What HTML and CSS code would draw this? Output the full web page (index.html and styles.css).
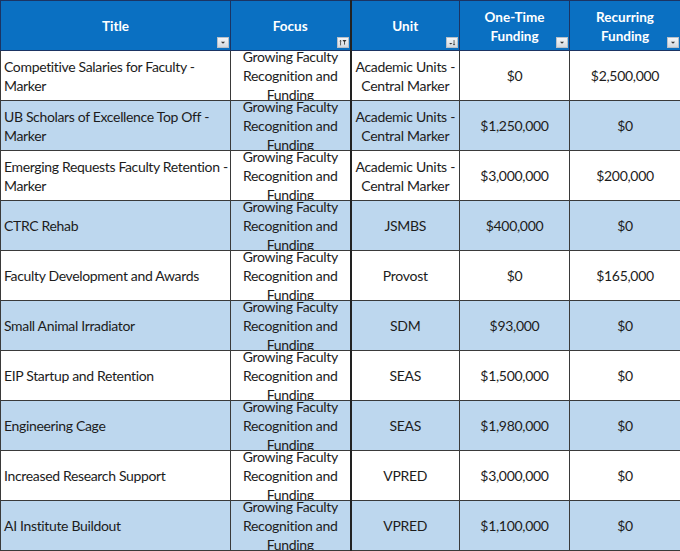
FILE: index.html
```html
<!DOCTYPE html>
<html>
<head>
<meta charset="utf-8">
<link rel="stylesheet" href="styles.css">
</head>
<body>
<table class="sheet">
  <colgroup>
    <col class="c-title"><col class="c-focus"><col class="c-unit"><col class="c-one"><col class="c-rec">
  </colgroup>
  <thead>
    <tr>
      <th><div class="hcell">Title<span class="fbtn"><svg viewBox="0 0 12 11"><path d="M3.5 4.5h5l-2.5 2.5z" fill="#333"/></svg></span></div></th>
      <th><div class="hcell">Focus<span class="fbtn"><svg viewBox="0 0 12 11"><path d="M3 3v6M2 4l1-1.2L4 4" stroke="#333" stroke-width="0.9" fill="none"/><path d="M5.3 2.5h5l-2 2.4v3.6l-1-.8v-2.8z" fill="#333"/></svg></span></div></th>
      <th class="thick"><div class="hcell">Unit<span class="fbtn"><svg viewBox="0 0 12 11"><path d="M2.5 6h4l-2 2z" fill="#333"/><path d="M8.5 2.5v6M7.5 7.5l1 1.2 1-1.2" stroke="#333" stroke-width="0.9" fill="none"/></svg></span></div></th>
      <th><div class="hcell">One-Time<br>Funding<span class="fbtn"><svg viewBox="0 0 12 11"><path d="M3.5 4.5h5l-2.5 2.5z" fill="#333"/></svg></span></div></th>
      <th><div class="hcell">Recurring<br>Funding<span class="fbtn"><svg viewBox="0 0 12 11"><path d="M3.5 4.5h5l-2.5 2.5z" fill="#333"/></svg></span></div></th>
    </tr>
  </thead>
  <tbody>
    <tr><td><div class="cell left">Competitive Salaries for Faculty - Marker</div></td><td><div class="cell">Growing Faculty Recognition and Funding</div></td><td class="thick"><div class="cell">Academic Units - Central Marker</div></td><td><div class="cell">$0</div></td><td><div class="cell">$2,500,000</div></td></tr>
    <tr class="alt"><td><div class="cell left">UB Scholars of Excellence Top Off - Marker</div></td><td><div class="cell">Growing Faculty Recognition and Funding</div></td><td class="thick"><div class="cell">Academic Units - Central Marker</div></td><td><div class="cell">$1,250,000</div></td><td><div class="cell">$0</div></td></tr>
    <tr><td><div class="cell left">Emerging Requests Faculty Retention - Marker</div></td><td><div class="cell">Growing Faculty Recognition and Funding</div></td><td class="thick"><div class="cell">Academic Units - Central Marker</div></td><td><div class="cell">$3,000,000</div></td><td><div class="cell">$200,000</div></td></tr>
    <tr class="alt"><td><div class="cell left">CTRC Rehab</div></td><td><div class="cell">Growing Faculty Recognition and Funding</div></td><td class="thick"><div class="cell">JSMBS</div></td><td><div class="cell">$400,000</div></td><td><div class="cell">$0</div></td></tr>
    <tr><td><div class="cell left">Faculty Development and Awards</div></td><td><div class="cell">Growing Faculty Recognition and Funding</div></td><td class="thick"><div class="cell">Provost</div></td><td><div class="cell">$0</div></td><td><div class="cell">$165,000</div></td></tr>
    <tr class="alt"><td><div class="cell left">Small Animal Irradiator</div></td><td><div class="cell">Growing Faculty Recognition and Funding</div></td><td class="thick"><div class="cell">SDM</div></td><td><div class="cell">$93,000</div></td><td><div class="cell">$0</div></td></tr>
    <tr><td><div class="cell left">EIP Startup and Retention</div></td><td><div class="cell">Growing Faculty Recognition and Funding</div></td><td class="thick"><div class="cell">SEAS</div></td><td><div class="cell">$1,500,000</div></td><td><div class="cell">$0</div></td></tr>
    <tr class="alt"><td><div class="cell left">Engineering Cage</div></td><td><div class="cell">Growing Faculty Recognition and Funding</div></td><td class="thick"><div class="cell">SEAS</div></td><td><div class="cell">$1,980,000</div></td><td><div class="cell">$0</div></td></tr>
    <tr><td><div class="cell left">Increased Research Support</div></td><td><div class="cell">Growing Faculty Recognition and Funding</div></td><td class="thick"><div class="cell">VPRED</div></td><td><div class="cell">$3,000,000</div></td><td><div class="cell">$0</div></td></tr>
    <tr class="alt"><td><div class="cell left">AI Institute Buildout</div></td><td><div class="cell">Growing Faculty Recognition and Funding</div></td><td class="thick"><div class="cell">VPRED</div></td><td><div class="cell">$1,100,000</div></td><td><div class="cell">$0</div></td></tr>
  </tbody>
</table>
</body>
</html>
```

FILE: styles.css
```css
html, body {
  margin: 0;
  padding: 0;
  background: #ffffff;
}

.sheet {
  border-collapse: collapse;
  table-layout: fixed;
  width: 680px;
  font-family: Lato, "Open Sans", sans-serif;
  font-size: 14px;
  color: #1c1c1c;
}

.c-title { width: 230px; }
.c-focus { width: 120px; }
.c-unit { width: 109px; }
.c-one { width: 110px; }
.c-rec { width: 111px; }

.sheet th,
.sheet td {
  padding: 0;
  border: 1px solid #3a3a3a;
  vertical-align: middle;
}

.sheet th {
  background: #0a70c2;
  border-color: #1b3463;
  color: #ffffff;
  font-weight: bold;
  font-size: 13.5px;
}

.sheet th.thick,
.sheet td.thick {
  border-left: 2px solid #222;
}

.hcell {
  position: relative;
  height: 49px;
  display: flex;
  align-items: center;
  justify-content: center;
  text-align: center;
  line-height: 19px;
  padding-top: 2px;
  box-sizing: border-box;
}

.fbtn {
  position: absolute;
  right: 1px;
  bottom: 2px;
  width: 12px;
  height: 11px;
  background: linear-gradient(#f4f6f8, #d4d9df);
  border: 1px solid #b9c0c8;
  box-sizing: border-box;
  display: flex;
}

.fbtn svg {
  width: 100%;
  height: 100%;
}

.cell {
  height: 49px;
  overflow: hidden;
  display: flex;
  align-items: center;
  justify-content: center;
  text-align: center;
  line-height: 19px;
  letter-spacing: -0.3px;
  padding: 0 3px;
  box-sizing: border-box;
}

.cell.left {
  justify-content: flex-start;
  text-align: left;
  padding: 0 0 0 3px;
  letter-spacing: -0.34px;
}

.sheet tr.alt td {
  background: #bdd7ee;
}
```
